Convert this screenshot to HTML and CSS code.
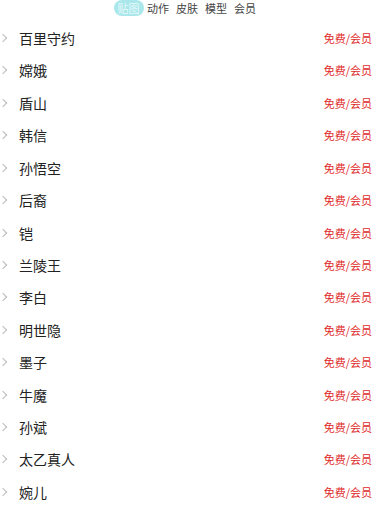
FILE: index.html
```html
<!DOCTYPE html>
<html lang="zh">
<head>
<meta charset="utf-8">
<link rel="stylesheet" href="styles.css">
</head>
<body>
<nav class="tabs">
  <span class="tab active">贴图</span>
  <span class="tab">动作</span>
  <span class="tab">皮肤</span>
  <span class="tab">模型</span>
  <span class="tab">会员</span>
</nav>
<ul class="list">
  <li class="row"><span class="chev"></span><span class="name">百里守约</span><span class="tag">免费/会员</span></li>
  <li class="row"><span class="chev"></span><span class="name">嫦娥</span><span class="tag">免费/会员</span></li>
  <li class="row"><span class="chev"></span><span class="name">盾山</span><span class="tag">免费/会员</span></li>
  <li class="row"><span class="chev"></span><span class="name">韩信</span><span class="tag">免费/会员</span></li>
  <li class="row"><span class="chev"></span><span class="name">孙悟空</span><span class="tag">免费/会员</span></li>
  <li class="row"><span class="chev"></span><span class="name">后裔</span><span class="tag">免费/会员</span></li>
  <li class="row"><span class="chev"></span><span class="name">铠</span><span class="tag">免费/会员</span></li>
  <li class="row"><span class="chev"></span><span class="name">兰陵王</span><span class="tag">免费/会员</span></li>
  <li class="row"><span class="chev"></span><span class="name">李白</span><span class="tag">免费/会员</span></li>
  <li class="row"><span class="chev"></span><span class="name">明世隐</span><span class="tag">免费/会员</span></li>
  <li class="row"><span class="chev"></span><span class="name">墨子</span><span class="tag">免费/会员</span></li>
  <li class="row"><span class="chev"></span><span class="name">牛魔</span><span class="tag">免费/会员</span></li>
  <li class="row"><span class="chev"></span><span class="name">孙斌</span><span class="tag">免费/会员</span></li>
  <li class="row"><span class="chev"></span><span class="name">太乙真人</span><span class="tag">免费/会员</span></li>
  <li class="row"><span class="chev"></span><span class="name">婉儿</span><span class="tag">免费/会员</span></li>
</ul>
</body>
</html>
```
FILE: styles.css
```css
* { box-sizing: border-box; }
html, body { margin: 0; padding: 0; background: #fff; }
body {
  font-family: "Noto Sans CJK SC", "Noto Sans", sans-serif;
  width: 375px;
  height: 517px;
  overflow: hidden;
}
.tabs {
  display: flex;
  justify-content: center;
  align-items: center;
  height: 16px;
  padding-right: 2px;
}
.tab {
  font-size: 11px;
  line-height: 16px;
  color: #444;
  padding: 0 3.5px;
}
.tab.active {
  background: #a9e7ea;
  color: #e6f9fa;
  border-radius: 8px;
  padding: 0 4px;
}
.list {
  list-style: none;
  margin: 5.8px 0 0;
  padding: 0;
}
.row {
  display: flex;
  align-items: center;
  height: 32.43px;
  padding: 0 3px 0 0;
}
.chev {
  width: 6px;
  height: 6px;
  border-top: 1px solid #bbb;
  border-right: 1px solid #bbb;
  transform: rotate(45deg);
  flex: none;
}
.name {
  flex: 1;
  margin-left: 13px;
  font-size: 14px;
  color: #222;
}
.tag {
  font-size: 11px;
  color: #e02a2a;
}
```
